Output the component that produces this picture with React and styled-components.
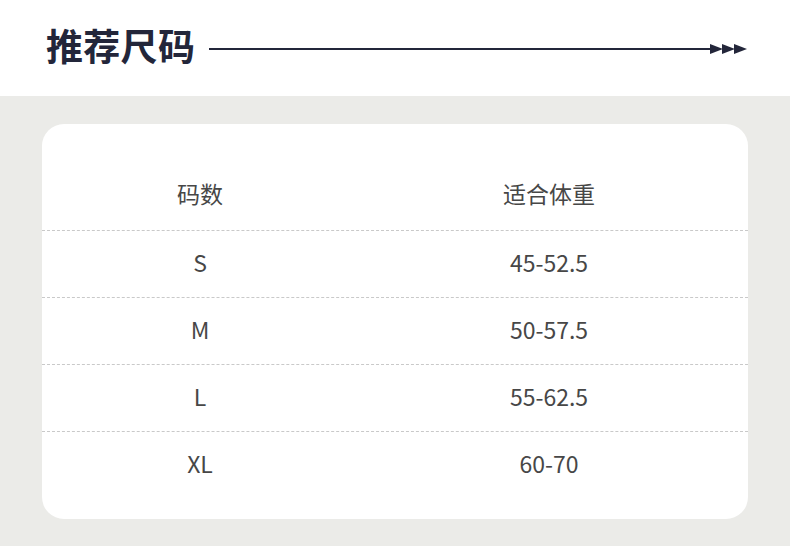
import React from 'react';
import styled, { createGlobalStyle } from 'styled-components';

const GlobalStyle = createGlobalStyle`
  body {
    margin: 0;
    background: #ffffff;
    font-family: "Noto Sans CJK SC", "Noto Sans", sans-serif;
  }
`;

const Page = styled.div`
  width: 790px;
  height: 553px;
  overflow: hidden;
`;

const TitleBar = styled.div`
  height: 96px;
  display: flex;
  align-items: center;
  padding: 0 42px 6px 46px;
  box-sizing: border-box;
  h1 {
    margin: 0;
    font-size: 37px;
    font-weight: 700;
    color: #23263a;
    letter-spacing: 0.3px;
    line-height: 1;
  }
`;

const Rule = styled.div`
  flex: 1;
  display: flex;
  align-items: center;
  margin-left: 14px;
  margin-top: 8px;
  .line {
    flex: 1;
    height: 2px;
    background: #23263a;
  }
`;

const Band = styled.div`
  background: #ebebe8;
  padding: 28px 42px 27px 42px;
`;

const Card = styled.div`
  background: #ffffff;
  border-radius: 22px;
  padding: 36px 0 21px 0;
`;

const Row = styled.div`
  display: grid;
  grid-template-columns: 316px 1fr;
  align-items: center;
  height: ${props => (props.head ? '70px' : '66px')};
  border-top: ${props => (props.head ? 'none' : '1px dashed #c9c9c9')};
  color: #474747;
  font-size: 23px;
  span {
    text-align: center;
    line-height: 1;
    padding-bottom: 4px;
  }
  > span:last-child {
    padding-right: 8px;
  }
`;

const sizes = [
  ['S', '45-52.5'],
  ['M', '50-57.5'],
  ['L', '55-62.5'],
  ['XL', '60-70'],
];

function Arrows() {
  return (
    <svg width="38" height="12" viewBox="0 0 38 12">
      <polygon points="0,1 13,6 0,11" fill="#23263a" />
      <polygon points="12,1 25,6 12,11" fill="#23263a" />
      <polygon points="24,1 37,6 24,11" fill="#23263a" />
    </svg>
  );
}

export default function App() {
  return (
    <Page>
      <GlobalStyle />
      <TitleBar>
        <h1>推荐尺码</h1>
        <Rule>
          <div className="line" />
          <Arrows />
        </Rule>
      </TitleBar>
      <Band>
        <Card>
          <Row head>
            <span>码数</span>
            <span>适合体重</span>
          </Row>
          {sizes.map(([size, weight]) => (
            <Row key={size}>
              <span>{size}</span>
              <span>{weight}</span>
            </Row>
          ))}
        </Card>
      </Band>
    </Page>
  );
}
